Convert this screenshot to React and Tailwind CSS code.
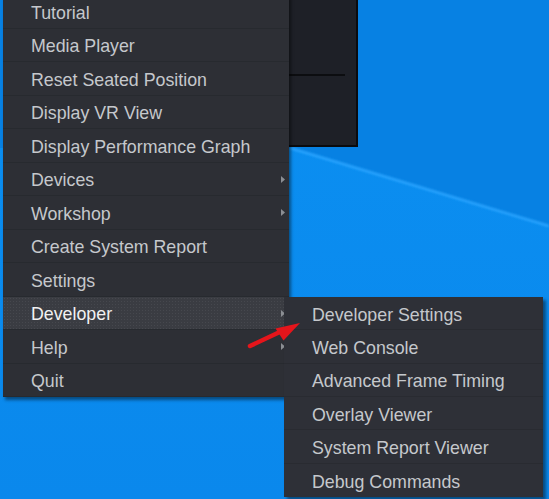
import React from "react";

const mainItems = [
  { label: "Tutorial" },
  { label: "Media Player" },
  { label: "Reset Seated Position" },
  { label: "Display VR View" },
  { label: "Display Performance Graph" },
  { label: "Devices", sub: true },
  { label: "Workshop", sub: true },
  { label: "Create System Report" },
  { label: "Settings" },
  { label: "Developer", sub: true, active: true },
  { label: "Help", sub: true },
  { label: "Quit" },
];

const subItems = [
  "Developer Settings",
  "Web Console",
  "Advanced Frame Timing",
  "Overlay Viewer",
  "System Report Viewer",
  "Debug Commands",
];

function Caret() {
  return (
    <svg width="4" height="7" viewBox="0 0 4 7" className="shrink-0 -mt-[4px]">
      <path d="M0 0 L4 3.5 L0 7 Z" fill="#8b8e93" />
    </svg>
  );
}

export default function App() {
  return (
    <div
      className="relative w-[549px] h-[499px] overflow-hidden bg-[#0a8aed]"
      style={{ fontFamily: '"Liberation Sans", Arial, sans-serif' }}
    >
      {/* wallpaper */}
      <svg className="absolute inset-0" width="549" height="499" viewBox="0 0 549 499">
        <defs>
          <linearGradient id="bottom" x1="0" y1="0" x2="0" y2="1">
            <stop offset="0" stopColor="#0b90f2" />
            <stop offset="1" stopColor="#0a88ec" />
          </linearGradient>
          <filter id="blur">
            <feGaussianBlur stdDeviation="1.2" />
          </filter>
        </defs>
        <rect x="0" y="0" width="549" height="499" fill="url(#bottom)" />
        <polygon points="0,0 549,0 549,226 290,148 0,148" fill="#0781e3" />
        <line x1="290" y1="148" x2="549" y2="226" stroke="#2aa4ff" strokeWidth="2.5" filter="url(#blur)" />
      </svg>

      {/* dark window behind */}
      <div className="absolute left-[200px] top-0 w-[158px] h-[147px] bg-[#1e2027] border-r-2 border-b-2 border-[#0a0b0e]">
        <div className="mt-[74px] ml-[89px] w-[56px] h-[2px] bg-[#0c0d10]" />
      </div>

      {/* main menu */}
      <div className="absolute left-[3px] top-[-5px] w-[286px] bg-[#2d2f35] shadow-[2px_3px_3px_rgba(0,0,0,0.45)]">
        {mainItems.map((it, i) => (
          <div
            key={i}
            className={
              "flex items-center h-[33.5px] pl-[28px] pr-[4px] pt-[5px] text-[17.8px] border-b border-[#272a2f] " +
              (it.active
                ? "bg-[#3a3c42] text-[#f2f2f2] bg-[radial-gradient(#46484e_0.8px,transparent_0.8px)] bg-[length:3px_3px]"
                : "text-[#c5c8cc]")
            }
          >
            <span className="flex-1 leading-none">{it.label}</span>
            {it.sub && <Caret />}
          </div>
        ))}
      </div>

      {/* submenu */}
      <div className="absolute left-[284px] top-[297px] w-[259px] bg-[#2e3037] shadow-[3px_3px_3px_rgba(0,0,0,0.45)]">
        {subItems.map((s, i) => (
          <div
            key={i}
            className="flex items-center h-[33.33px] pl-[28px] pt-[5px] text-[17.8px] text-[#c5c8cc] border-b border-[#292b31] last:border-b-0"
          >
            <span className="leading-none">{s}</span>
          </div>
        ))}
      </div>

      {/* red annotation arrow */}
      <svg className="absolute left-0 top-0 pointer-events-none" width="549" height="499" viewBox="0 0 549 499">
        <line x1="250" y1="346" x2="284" y2="330" stroke="#e5151b" strokeWidth="4.5" strokeLinecap="round" />
        <polygon points="300,323 275.5,328.5 283.5,340.5" fill="#e5151b" />
      </svg>
    </div>
  );
}
